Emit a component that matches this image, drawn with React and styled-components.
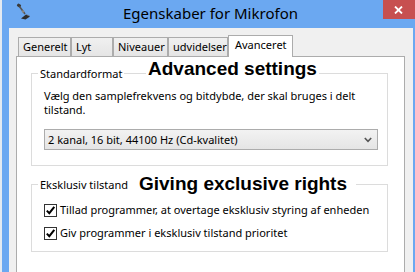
import React from "react";
import styled, { createGlobalStyle } from "styled-components";

const GlobalStyle = createGlobalStyle`
  html, body { margin: 0; padding: 0; }
  body { background: #6ba8f1; overflow: hidden; }
`;

const Window = styled.div`
  width: 415px;
  height: 272px;
  box-sizing: border-box;
  border-left: 2px solid #e4eaf1;
  background: #6ba8f1;
  display: flex;
  flex-direction: column;
  overflow: hidden;
  font-family: "Noto Sans", sans-serif;
  color: #000;
`;

const TitleBar = styled.div`
  height: 28px;
  flex: none;
  box-sizing: border-box;
  padding-left: 4px;
  display: grid;
  grid-template-columns: 1fr auto 1fr;
  align-items: start;
`;

const AppIcon = styled.svg`
  justify-self: start;
  margin: 3px 0 0 8px;
`;

const Title = styled.div`
  font-size: 15px;
  line-height: 26px;
  color: #000;
  white-space: nowrap;
`;

const CloseButton = styled.div`
  justify-self: end;
  width: 32px;
  height: 19px;
  box-sizing: border-box;
  padding-right: 2px;
  background: #c75050;
  display: flex;
  align-items: center;
  justify-content: center;
`;

const Body = styled.div`
  flex: 1;
  margin: 0 2px 0 7px;
  background: #f0f0f0;
  padding: 7px 8px 0 7px;
  display: flex;
  flex-direction: column;
  min-height: 0;
`;

const TabStrip = styled.div`
  position: relative;
  z-index: 1;
  height: 21px;
  flex: none;
  display: flex;
  align-items: flex-end;
  padding-left: 2px;
`;

const Tab = styled.div`
  box-sizing: border-box;
  width: ${(p) => p.$w}px;
  height: ${(p) => (p.$active ? 22 : 19)}px;
  margin-bottom: ${(p) => (p.$active ? -1 : 0)}px;
  border: 1px solid #acacac;
  border-bottom: none;
  background: ${(p) =>
    p.$active ? "#fff" : "linear-gradient(#f0f0f0, #e5e5e5)"};
  padding-left: ${(p) => (p.$active ? 6 : 4)}px;
  font-size: 11px;
  line-height: 17px;
  white-space: nowrap;
`;

const Panel = styled.div`
  flex: 1;
  background: #fff;
  border: 1px solid #acacac;
  padding: 9px 16px 40px 14px;
  display: flex;
  flex-direction: column;
`;

const GroupBox = styled.fieldset`
  margin: ${(p) => p.$top || 0}px 0 0 0;
  min-width: 0;
  border: 1px solid #dcdcdc;
  padding: ${(p) => p.$pad};
  font-size: 11px;
`;

const Legend = styled.legend`
  position: relative;
  margin-left: -6px;
  padding: 0 2px;
  font-size: 11px;
  line-height: 15px;
  white-space: nowrap;
`;

const Annotation = styled.span`
  position: absolute;
  left: ${(p) => p.$left}px;
  top: ${(p) => p.$top}px;
  padding: 0 ${(p) => p.$padX || 2}px;
  background: #fff;
  font-family: "Liberation Sans", Arial, sans-serif;
  font-weight: bold;
  font-size: 19px;
  line-height: 20px;
  white-space: nowrap;
`;

const Description = styled.div`
  font-size: 11px;
  line-height: 14px;
`;

const Dropdown = styled.div`
  margin-top: 12px;
  height: 21px;
  box-sizing: border-box;
  border: 1px solid #acacac;
  background: linear-gradient(#f2f2f2, #e5e5e5);
  display: flex;
  align-items: center;
  justify-content: space-between;
  padding: 0 5px 0 3px;
  font-size: 11px;
  line-height: 19px;
`;

const CheckRow = styled.div`
  display: flex;
  align-items: flex-start;
  margin-top: ${(p) => (p.$first ? 0 : 10)}px;
`;

const CheckBox = styled.span`
  flex: none;
  width: 13px;
  height: 13px;
  box-sizing: border-box;
  border: 1px solid #333;
  background: #fff;
  display: flex;
  align-items: center;
  justify-content: center;
`;

const CheckLabel = styled.span`
  margin: -1px 0 0 3px;
  font-size: 11px;
  line-height: 13px;
  white-space: nowrap;
`;

const tabs = [
  { label: "Generelt", w: 53 },
  { label: "Lyt", w: 42 },
  { label: "Niveauer", w: 55 },
  { label: "udvidelser", w: 60 },
  { label: "Avanceret", w: 65, active: true },
];

function MicIcon() {
  return (
    <AppIcon width="18" height="18" viewBox="0 0 18 18">
      <rect x="3" y="1" width="4" height="3" rx="1" transform="rotate(35 5 2.5)" fill="#3a3a3a" />
      <line x1="5.5" y1="3.5" x2="11" y2="11" stroke="#555" strokeWidth="1.6" />
      <circle cx="9" cy="8.5" r="1.2" fill="#888" />
      <path d="M7 15.5 L12 11.5 L16 13.5 L11.5 16.5 Z" fill="#2e2e2e" />
      <path d="M12 11.5 L16 13.5 L15 12 Z" fill="#777" />
    </AppIcon>
  );
}

function Check() {
  return (
    <svg width="11" height="11" viewBox="0 0 11 11">
      <path d="M1.8 5.6 L4.3 8.2 L9.3 1.8" fill="none" stroke="#000" strokeWidth="2" />
    </svg>
  );
}

export default function App() {
  return (
    <>
      <GlobalStyle />
      <Window>
        <TitleBar>
          <MicIcon />
          <Title>Egenskaber for Mikrofon</Title>
          <CloseButton>
            <svg width="9" height="8" viewBox="0 0 9 8">
              <path d="M1 0.5 L8 7.5 M8 0.5 L1 7.5" stroke="#fff" strokeWidth="1.8" />
            </svg>
          </CloseButton>
        </TitleBar>
        <Body>
          <TabStrip>
            {tabs.map((t) => (
              <Tab key={t.label} $w={t.w} $active={t.active}>
                {t.label}
              </Tab>
            ))}
          </TabStrip>
          <Panel>
            <GroupBox $pad="8px 9px 15px 12px">
              <Legend>
                Standardformat
                <Annotation $left={108} $top={-7}>Advanced settings</Annotation>
              </Legend>
              <Description>
                Vælg den samplefrekvens og bitdybde, der skal bruges i delt
                <br />
                tilstand.
              </Description>
              <Dropdown>
                <span>2 kanal, 16 bit, 44100 Hz (Cd-kvalitet)</span>
                <svg width="8" height="6" viewBox="0 0 8 6">
                  <path d="M0.8 1 L4 4.4 L7.2 1" fill="none" stroke="#555" strokeWidth="1.6" />
                </svg>
              </Dropdown>
            </GroupBox>
            <GroupBox $top={11} $pad="12px 9px 11px 12px">
              <Legend>
                Eksklusiv tilstand
                <Annotation $left={92} $top={-3} $padX={9}>Giving exclusive rights</Annotation>
              </Legend>
              <CheckRow $first>
                <CheckBox><Check /></CheckBox>
                <CheckLabel>Tillad programmer, at overtage eksklusiv styring af enheden</CheckLabel>
              </CheckRow>
              <CheckRow>
                <CheckBox><Check /></CheckBox>
                <CheckLabel>Giv programmer i eksklusiv tilstand prioritet</CheckLabel>
              </CheckRow>
            </GroupBox>
          </Panel>
        </Body>
      </Window>
    </>
  );
}
